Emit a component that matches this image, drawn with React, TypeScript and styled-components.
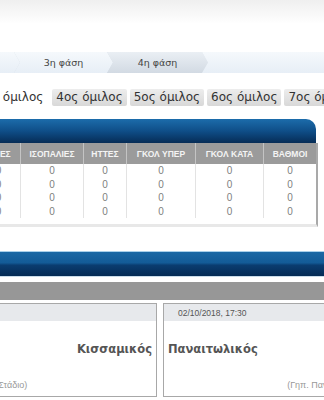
import * as React from "react";
import styled, { createGlobalStyle } from "styled-components";

const GlobalStyle = createGlobalStyle`
  html, body {
    margin: 0;
    padding: 0;
    background: #fff;
    overflow: hidden;
  }
`;

const Page = styled.div`
  width: 324px;
  height: 400px;
  overflow: hidden;
  display: flex;
  flex-direction: column;
  font-family: "DejaVu Sans", sans-serif;
`;

const TopShade = styled.div`
  height: 24px;
  flex-shrink: 0;
  background: linear-gradient(#efefef, #fff);
`;

const Crumbs = styled.div`
  margin-top: 28px;
  height: 21px;
  flex-shrink: 0;
  display: flex;
  background: #d6dee7;
  margin-left: -60px;
`;

const Crumb = styled.div<{ $w: number; $active?: boolean; $last?: boolean }>`
  width: ${p => p.$w}px;
  flex: ${p => (p.$last ? "1" : "none")};
  margin-right: -6px;
  display: flex;
  align-items: center;
  justify-content: center;
  font-size: 9.5px;
  color: #444;
  background: ${p =>
    p.$active
      ? "linear-gradient(#eaeff4, #d2dae3)"
      : "linear-gradient(#f5f9fc, #e7eef6)"};
  clip-path: ${p =>
    p.$last
      ? "polygon(0 0, 100% 0, 100% 100%, 0 100%, 6px 50%)"
      : "polygon(0 0, calc(100% - 6px) 0, 100% 50%, calc(100% - 6px) 100%, 0 100%, 6px 50%)"};
  &:first-child {
    clip-path: polygon(0 0, calc(100% - 6px) 0, 100% 50%, calc(100% - 6px) 100%, 0 100%);
  }
`;

const Tabs = styled.div`
  margin-top: 16px;
  height: 18px;
  flex-shrink: 0;
  display: flex;
  gap: 3px;
  margin-left: -27px;
  white-space: nowrap;
`;

const Tab = styled.div<{ $current?: boolean }>`
  flex: none;
  padding: 0 4px;
  height: 17px;
  line-height: 17px;
  font-size: 12px;
  color: #333;
  border-radius: 2px;
  background: ${p => (p.$current ? "transparent" : "linear-gradient(#ededed, #d8d8d8)")};
  margin-right: ${p => (p.$current ? "2px" : "0")};
`;

const BlueHead = styled.div`
  margin-top: 12px;
  width: 316px;
  height: 24px;
  flex-shrink: 0;
  border-top-right-radius: 10px;
  background: linear-gradient(#1c6cab, #0f4e88 50%, #062c56);
`;

const Table = styled.div`
  margin-left: -24px;
  width: 342px;
  flex-shrink: 0;
  box-sizing: border-box;
  display: grid;
  grid-template-columns: 44px 63px 43px 69px 68px 53px;
  grid-template-rows: 21px repeat(4, 13.5px) 6px;
  border-right: 2px solid #a9a9a9;
  border-bottom: 3px solid #e8e8e8;
`;

const HeadCell = styled.div`
  background: #9b9b9b;
  color: #f4f4f4;
  font-family: "Liberation Sans", sans-serif;
  font-weight: bold;
  font-size: 8.5px;
  display: flex;
  align-items: center;
  justify-content: center;
  border-left: 1px solid #c4c4c4;
  &:first-child {
    border-left: none;
  }
`;

const Cell = styled.div`
  font-family: "Liberation Sans", sans-serif;
  font-size: 10px;
  color: #808080;
  display: flex;
  align-items: center;
  justify-content: center;
  border-left: 1px solid #e3e3e3;
`;

const Spacer = styled.div`
  grid-column: 1 / -1;
`;

const BlueBar = styled.div`
  margin-top: 24px;
  height: 24px;
  flex-shrink: 0;
  border-top: 1px solid #a9d0ea;
  border-bottom: 1px solid #c9dcea;
  background: linear-gradient(#1a68a5, #135b97 45%, #0a3c70 55%, #052b55);
`;

const GrayBand = styled.div`
  margin-top: 5px;
  height: 18px;
  flex-shrink: 0;
  background: #979797;
`;

const Cards = styled.div`
  margin-top: 3px;
  display: flex;
  gap: 6px;
  margin-left: -173px;
  flex-shrink: 0;
`;

const Card = styled.div`
  width: 330px;
  height: 94px;
  flex: none;
  box-sizing: border-box;
  border: 1px solid #a8a8a8;
  display: flex;
  flex-direction: column;
`;

const CardHead = styled.div`
  height: 17px;
  background: #e7e9ec;
  padding-left: 14px;
  display: flex;
  align-items: center;
  font-family: "Liberation Sans", sans-serif;
  font-size: 8.5px;
  color: #555;
`;

const Teams = styled.div`
  margin-top: 18px;
  padding: 0 4px;
  display: flex;
  justify-content: space-between;
  height: 20px;
  align-items: center;
`;

const Team = styled.div`
  font-size: 11.5px;
  font-weight: bold;
  color: #555;
`;

const Venue = styled.div`
  margin-top: 21px;
  text-align: center;
  font-family: "Liberation Sans", sans-serif;
  font-size: 9px;
  color: #999;
`;

const heads = ["ΝΙΚΕΣ", "ΙΣΟΠΑΛΙΕΣ", "ΗΤΤΕΣ", "ΓΚΟΛ ΥΠΕΡ", "ΓΚΟΛ ΚΑΤΑ", "ΒΑΘΜΟΙ"];

const matches = [
  { date: "02/10/2018, 17:00", home: "Πλατανιάς", away: "Κισσαμικός", venue: "(Δημοτικό Στάδιο)" },
  { date: "02/10/2018, 17:30", home: "Παναιτωλικός", away: "Απόλλων Σμ.", venue: "(Γηπ. Παναιτωλικού)" },
];

export default function App() {
  return (
    <Page>
      <GlobalStyle />
      <TopShade />
      <Crumbs>
        <Crumb $w={80}>2η φάση</Crumb>
        <Crumb $w={99}>3η φάση</Crumb>
        <Crumb $w={101} $active>4η φάση</Crumb>
        <Crumb $w={100} $last />
      </Crumbs>
      <Tabs>
        <Tab $current>3ος όμιλος</Tab>
        <Tab>4ος όμιλος</Tab>
        <Tab>5ος όμιλος</Tab>
        <Tab>6ος όμιλος</Tab>
        <Tab>7ος όμιλος</Tab>
      </Tabs>
      <BlueHead />
      <Table>
        {heads.map(h => (
          <HeadCell key={h}>{h}</HeadCell>
        ))}
        {[0, 1, 2, 3].map(r =>
          heads.map(h => <Cell key={r + h}>0</Cell>)
        )}
        <Spacer />
      </Table>
      <BlueBar />
      <GrayBand />
      <Cards>
        {matches.map(m => (
          <Card key={m.date}>
            <CardHead>{m.date}</CardHead>
            <Teams>
              <Team>{m.home}</Team>
              <Team>{m.away}</Team>
            </Teams>
            <Venue>{m.venue}</Venue>
          </Card>
        ))}
      </Cards>
    </Page>
  );
}
